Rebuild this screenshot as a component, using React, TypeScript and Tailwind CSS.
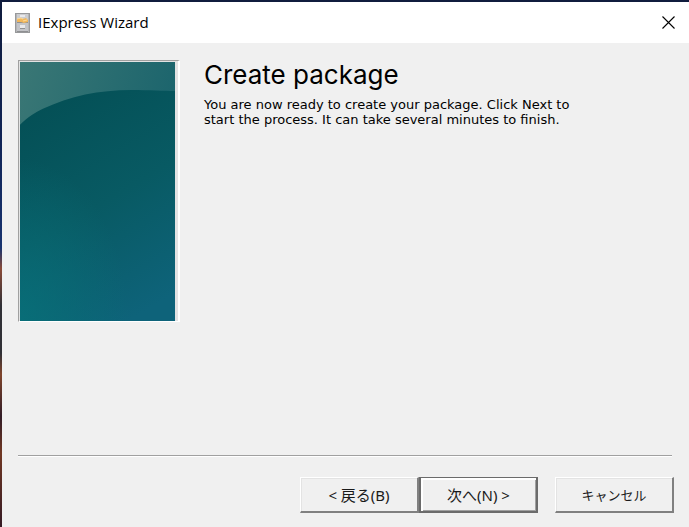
import type { ReactNode } from 'react'

const raised =
    'border-t border-l border-r-2 border-b-2 border-t-white border-l-white border-r-[#808080] border-b-[#808080] shadow-[inset_1px_1px_0_#e3e3e3]'
const focused =
    'border-2 border-t border-[#6b6b6b] shadow-[inset_2px_2px_0_#ffffff,inset_-1px_-1px_0_#a0a0a0]'

function WizardButton({
    children,
    primary = false,
    compact = false,
}: {
    children: ReactNode
    primary?: boolean
    compact?: boolean
}) {
    return (
        <button
            type="button"
            className={`flex h-9 w-[119px] items-center justify-center bg-[#f0f0f0] leading-5 whitespace-pre text-[#1a1a1a] ${compact ? 'text-[13px]' : 'text-[15px]'} ${primary ? focused : raised}`}
        >
            {children}
        </button>
    )
}

function CabinetIcon() {
    return (
        <svg width="16" height="20" viewBox="0 0 16 20" aria-hidden="true">
            <rect x="0.5" y="0.5" width="14" height="19" fill="#b4b5b7" stroke="#98999b" />
            <rect x="2" y="1" width="11" height="8" fill="#cccdd0" />
            <rect x="2" y="10" width="11" height="8" fill="#c3c4c8" />
            <path d="M2 9.5h11M2 18.5h11" stroke="#8f9092" />
            <rect x="5" y="2" width="5" height="2" fill="#e9e9ec" />
            <path d="M2 6l4-1 2 1 3-1 2 2v2l-4 1-3-1H2z" fill="#f1b75c" />
            <path d="M2 6l4-1 2 1M8 8l4-1" fill="none" stroke="#ffdb96" />
            <rect x="5" y="12" width="5" height="3" fill="#e9e9ec" />
            <path d="M5 15.5h5" stroke="#8f9092" />
        </svg>
    )
}

function WizardArt() {
    return (
        <svg className="block h-[259px] w-[155px]" viewBox="0 0 156 260" preserveAspectRatio="none" aria-hidden="true">
            <defs>
                <linearGradient id="sky" x1="0" y1="0" x2="1" y2="0.4">
                    <stop offset="0" stopColor="#3a7775" />
                    <stop offset="1" stopColor="#19636c" />
                </linearGradient>
                <linearGradient id="sea" x1="0.3" y1="0" x2="0.7" y2="1">
                    <stop offset="0" stopColor="#045056" />
                    <stop offset="0.5" stopColor="#085a63" />
                    <stop offset="1" stopColor="#0e637a" />
                </linearGradient>
                <radialGradient id="glow" cx="0" cy="1" r="0.7">
                    <stop offset="0" stopColor="#087079" stopOpacity="0.85" />
                    <stop offset="1" stopColor="#087079" stopOpacity="0" />
                </radialGradient>
            </defs>
            <rect width="156" height="260" fill="url(#sky)" />
            <path d="M0 63C8 55 15 51 23 47C50 34 80 28 112 28C130 28 145 29 156 29V260H0Z" fill="url(#sea)" />
            <path d="M0 63C8 55 15 51 23 47C50 34 80 28 112 28C130 28 145 29 156 29V260H0Z" fill="url(#glow)" />
        </svg>
    )
}

export default function App() {
    return (
        <div className="h-screen bg-[linear-gradient(#101c3d_0%,#102354_25%,#18336f_47%,#8a4b38_51%,#303036_58%,#303036_67%,#80452c_71%,#321d27_79%,#713824_86%,#351b25_100%)] pt-0.5 pl-0.5">
            <div className="flex h-full flex-col bg-[#f0f0f0] font-['Noto_Sans','Noto_Sans_CJK_JP',sans-serif] text-black">
                <header className="flex h-[41px] shrink-0 items-center bg-white px-[13px]">
                    <CabinetIcon />
                    <span className="ml-[7px] flex-1 pb-0.5 font-['Open_Sans','Noto_Sans_CJK_JP',sans-serif] text-[15px] leading-5">
                        IExpress Wizard
                    </span>
                    <button type="button" aria-label="Close" className="flex size-4 items-center justify-center">
                        <svg width="13" height="13" viewBox="0 0 13 13" aria-hidden="true">
                            <path d="M.5.5l12 12M12.5.5l-12 12" stroke="#000" strokeWidth="1.1" />
                        </svg>
                    </button>
                </header>

                <main className="flex flex-1 items-start gap-6 px-4 pt-[17px]">
                    {/* Sunken picture frame */}
                    <div className="shrink-0 border-t border-r-2 border-b border-l border-t-[#a0a0a0] border-r-white border-b-white border-l-[#a0a0a0] bg-[#e3e3e3] pt-px pr-[3px] pl-px">
                        <WizardArt />
                    </div>
                    <div className="min-w-0">
                        <h1 className="font-['Inter',sans-serif] text-[26px] leading-[30px]">Create package</h1>
                        <p className="mt-[7px] max-w-[380px] font-['DejaVu_Sans',sans-serif] text-[13px] leading-[15px]">
                            You are now ready to create your package. Click Next to start the process. It can take several minutes to finish.
                        </p>
                    </div>
                </main>

                <footer className="pr-[15px] pb-[14px] pl-4">
                    <hr className="mr-0.5 border-t border-b border-t-[#a0a0a0] border-b-white" />
                    <div className="mt-5 flex justify-end">
                        <WizardButton>{'< 戻る(B)'}</WizardButton>
                        <WizardButton primary>{'次へ(N) >'}</WizardButton>
                        <div className="ml-[17px]">
                            <WizardButton compact>キャンセル</WizardButton>
                        </div>
                    </div>
                </footer>
            </div>
        </div>
    )
}
